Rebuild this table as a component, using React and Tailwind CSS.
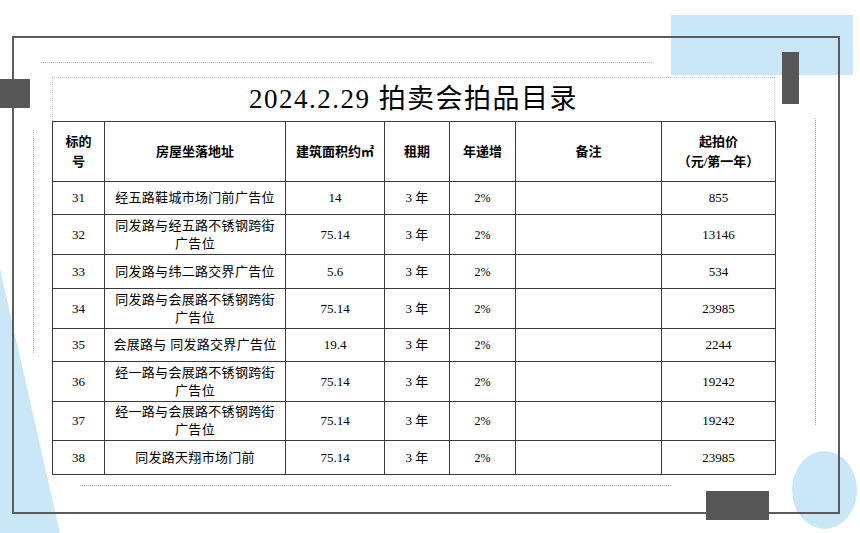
const rows = [
  { id: "31", addr: ["经五路鞋城市场门前广告位"], area: "14", price: "855", h: "h-[33px]" },
  { id: "32", addr: ["同发路与经五路不锈钢跨街", "广告位"], area: "75.14", price: "13146", h: "h-[40px]" },
  { id: "33", addr: ["同发路与纬二路交界广告位"], area: "5.6", price: "534", h: "h-[34px]" },
  { id: "34", addr: ["同发路与会展路不锈钢跨街", "广告位"], area: "75.14", price: "23985", h: "h-[40px]" },
  { id: "35", addr: ["会展路与 同发路交界广告位"], area: "19.4", price: "2244", h: "h-[33px]" },
  { id: "36", addr: ["经一路与会展路不锈钢跨街", "广告位"], area: "75.14", price: "19242", h: "h-[40px]" },
  { id: "37", addr: ["经一路与会展路不锈钢跨街", "广告位"], area: "75.14", price: "19242", h: "h-[39px]" },
  { id: "38", addr: ["同发路天翔市场门前"], area: "75.14", price: "23985", h: "h-[34px]" },
];

const cell = "border border-[#3a3a3a] text-center align-middle p-0";

export default function App() {
  return (
    <div className="relative w-[860px] h-[533px] overflow-hidden bg-white font-[family-name:'Liberation_Serif','Noto_Sans_CJK_SC',serif] text-black">
      {/* background shapes */}
      <div className="absolute left-[671px] top-[15px] w-[182px] h-[60px] bg-[#c9e7f7]"></div>
      <div className="absolute left-[792px] top-[451px] w-[65px] h-[78px] rounded-[50%] bg-[#c9e7f7]"></div>
      <svg className="absolute left-0 top-0" width="860" height="533">
        <polygon points="0,269 0,533 60,533" fill="#c9e7f7" />
      </svg>

      {/* frame */}
      <div className="relative ml-[12px] mt-[36px] w-[828px] h-[478px] border-2 border-[#5c5c5c] pl-[38px] pt-[39px]">
        <div className="w-[723px] h-[44px] border border-b-0 border-dotted border-[#c4c4c4] bg-white flex items-center justify-center">
          <span className="text-[27px] tracking-[1.5px] leading-none">2024.2.29 拍卖会拍品目录</span>
        </div>
        <table className="table-fixed border-collapse bg-white w-[723px] text-[13px] leading-[18px]">
          <colgroup>
            <col className="w-[52px]" />
            <col className="w-[181px]" />
            <col className="w-[99px]" />
            <col className="w-[65px]" />
            <col className="w-[66px]" />
            <col className="w-[146px]" />
            <col className="w-[114px]" />
          </colgroup>
          <thead>
            <tr className="h-[60px] font-bold leading-[20px]">
              <th className={cell}>标的<br />号</th>
              <th className={cell}>房屋坐落地址</th>
              <th className={cell}>建筑面积约㎡</th>
              <th className={cell}>租期</th>
              <th className={cell}>年递增</th>
              <th className={cell}>备注</th>
              <th className={cell}>起拍价<br />（元/第一年）</th>
            </tr>
          </thead>
          <tbody>
            {rows.map((r) => (
              <tr key={r.id} className={r.h}>
                <td className={cell}>{r.id}</td>
                <td className={cell + " tracking-[0.3px]"}>
                  {r.addr.map((l, i) => (
                    <div key={i}>{l}</div>
                  ))}
                </td>
                <td className={cell}>{r.area}</td>
                <td className={cell}>3 年</td>
                <td className={cell + " text-[12px]"}>2%</td>
                <td className={cell}></td>
                <td className={cell}>{r.price}</td>
              </tr>
            ))}
          </tbody>
        </table>
      </div>

      {/* dark blocks */}
      <div className="absolute left-0 top-[79px] w-[30px] h-[29px] bg-[#565656]"></div>
      <div className="absolute left-[782px] top-[52px] w-[17px] h-[52px] bg-[#565656]"></div>
      <div className="absolute left-[706px] top-[491px] w-[63px] h-[29px] bg-[#565656]"></div>

      {/* dotted guide lines */}
      <div className="absolute left-[41px] top-[62px] w-[611px] border-t border-dotted border-[#b0b0b0]"></div>
      <div className="absolute left-[80px] top-[485px] w-[591px] border-t border-dotted border-[#b0b0b0]"></div>
      <div className="absolute left-[33px] top-[130px] h-[223px] border-l border-dotted border-[#b0b0b0]"></div>
      <div className="absolute left-[815px] top-[118px] h-[307px] border-l border-dotted border-[#b0b0b0]"></div>
    </div>
  );
}
